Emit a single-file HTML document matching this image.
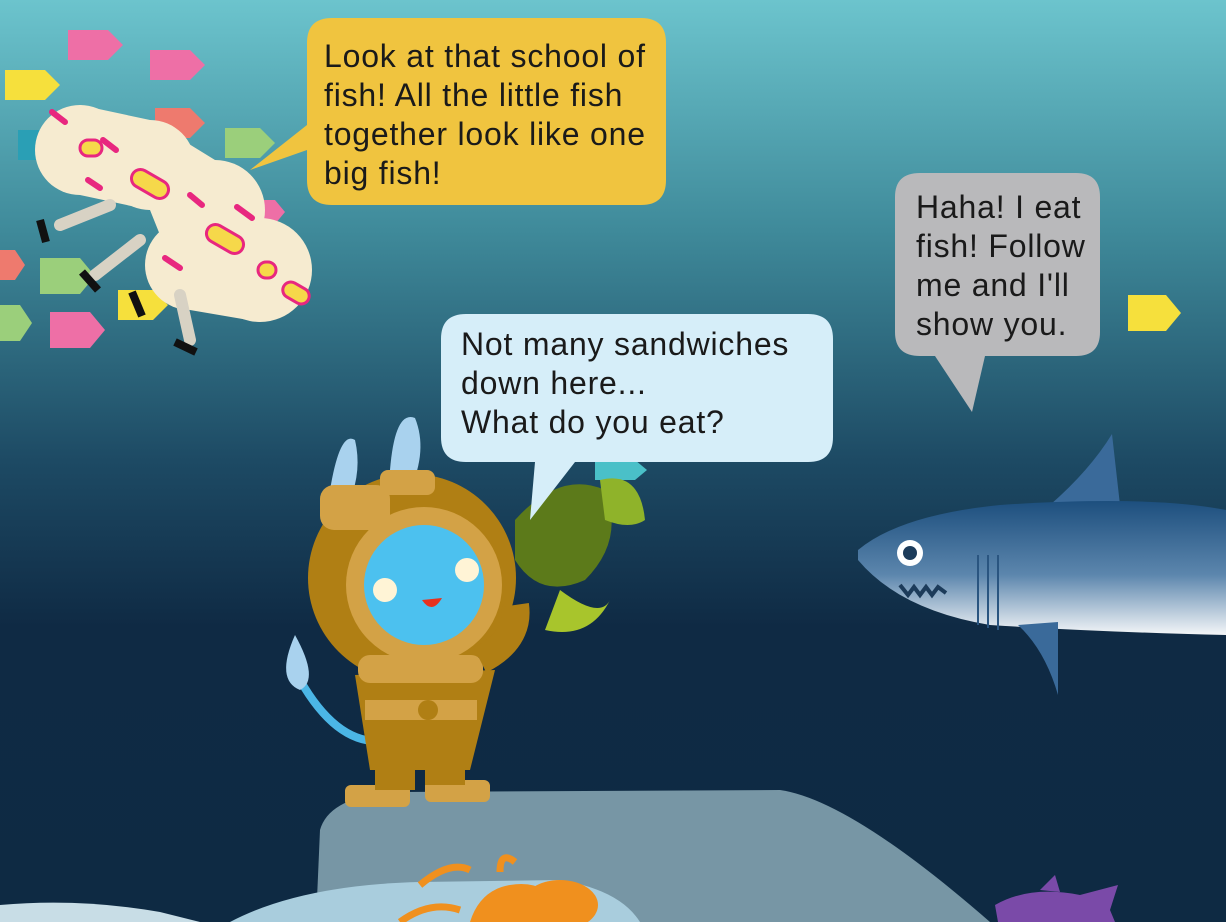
<!DOCTYPE html>
<html><head><meta charset="utf-8"><style>
html,body{margin:0;padding:0}
body{width:1226px;height:922px;overflow:hidden;position:relative;font-family:"Liberation Sans",sans-serif}
svg{position:absolute;left:0;top:0}
.b{position:absolute;font-size:32px;line-height:39px;color:#1a1a1a;letter-spacing:0.8px;white-space:nowrap}
</style></head><body>
<svg width="1226" height="922" viewBox="0 0 1226 922">
<defs>
<linearGradient id="bg" x1="0" y1="0" x2="0" y2="1">
<stop offset="0" stop-color="#6cc4cd"/><stop offset="0.25" stop-color="#3f8a9a"/>
<stop offset="0.5" stop-color="#1d4a64"/><stop offset="0.68" stop-color="#0f2a44"/><stop offset="1" stop-color="#0e2a43"/>
</linearGradient>
<linearGradient id="sh" x1="0" y1="0" x2="0" y2="1">
<stop offset="0" stop-color="#1d4f7e"/><stop offset="0.55" stop-color="#5c86ad"/><stop offset="1" stop-color="#f4f6f8"/>
</linearGradient>
</defs>
<rect width="1226" height="922" fill="url(#bg)"/>
<path d="M316 922 L320 830 Q330 795 400 792 L780 790 Q850 800 990 922 Z" fill="#7796a5"/>
<path d="M230 922 Q300 885 420 882 L560 880 Q620 890 640 922 Z" fill="#a9cddd"/>
<path d="M0 922 L0 905 Q80 898 160 912 L200 922Z" fill="#c8dde6"/>
<g>
<path d="M68 30 l40 0 l15 15 l-15 15 l-40 0z" fill="#ee6fa6"/>
<path d="M150 50 l40 0 l15 15 l-15 15 l-40 0z" fill="#ee6fa6"/>
<path d="M5 70 l40 0 l15 15 l-15 15 l-40 0z" fill="#f6e03c"/>
<path d="M225 128 l35 0 l15 15 l-15 15 l-35 0z" fill="#9bcf7b"/>
<path d="M155 108 l35 0 l15 15 l-15 15 l-35 0z" fill="#ee7a6e"/>
<path d="M18 130 l30 0 l12 15 l-12 15 l-30 0z" fill="#2a9fb5"/>
<path d="M40 258 l40 0 l15 18 l-15 18 l-40 0z" fill="#9bcf7b"/>
<path d="M0 250 l15 0 l10 15 l-10 15 l-15 0z" fill="#ee7a6e"/>
<path d="M50 312 l40 0 l15 18 l-15 18 l-40 0z" fill="#ee6fa6"/>
<path d="M0 305 l20 0 l12 18 l-12 18 l-20 0z" fill="#9bcf7b"/>
<path d="M118 290 l35 0 l15 15 l-15 15 l-35 0z" fill="#f6e03c"/>
<path d="M255 200 l20 0 l10 12 l-10 12 l-20 0z" fill="#ee6fa6"/>
<path d="M1128 295 l38 0 l15 18 l-15 18 l-38 0z" fill="#f6e03c"/>
<path d="M595 460 l40 0 l12 10 l-12 10 l-40 0z" fill="#4ac0c8"/>
</g>
<g fill="#f6ebd0">
<circle cx="80" cy="150" r="45"/><circle cx="150" cy="165" r="45"/><circle cx="215" cy="210" r="50"/><circle cx="260" cy="270" r="52"/><circle cx="190" cy="265" r="45"/>
<path d="M80 105 L150 120 L215 160 L260 218 L260 322 L190 310 L150 210 L80 195Z"/>
</g>
<g stroke="#e8277f" stroke-width="6" stroke-linecap="round">
<line x1="52" y1="112" x2="65" y2="122"/><line x1="103" y1="140" x2="116" y2="150"/><line x1="88" y1="180" x2="100" y2="188"/><line x1="237" y1="207" x2="252" y2="218"/><line x1="165" y1="258" x2="180" y2="268"/><line x1="190" y1="195" x2="202" y2="205"/>
</g>
<g fill="#f6d84a" stroke="#e8277f" stroke-width="3">
<rect x="130" y="175" width="40" height="18" rx="9" transform="rotate(30 150 184)"/>
<rect x="205" y="230" width="40" height="18" rx="9" transform="rotate(30 225 239)"/>
<rect x="80" y="140" width="22" height="16" rx="8"/><rect x="258" y="262" width="18" height="16" rx="8"/>
<rect x="282" y="285" width="28" height="16" rx="8" transform="rotate(30 296 293)"/>
</g>
<g stroke="#d8d2c4" stroke-width="12" stroke-linecap="round" fill="none">
<path d="M110 205 L60 225"/><path d="M140 240 L95 275"/><path d="M180 295 L190 340"/>
</g>
<g stroke="#111" stroke-width="8"><line x1="40" y1="220" x2="46" y2="242"/><line x1="82" y1="272" x2="98" y2="290"/><line x1="132" y1="292" x2="142" y2="316"/><line x1="175" y1="342" x2="196" y2="352"/></g>
<path d="M1050 505 Q1090 470 1112 434 L1120 505Z" fill="#3a6a9a"/>
<path d="M858 550 Q900 515 1000 505 Q1150 495 1226 510 L1226 635 Q1100 632 990 625 Q900 610 858 560Z" fill="url(#sh)"/>
<path d="M1018 625 L1058 622 L1058 695 Q1045 650 1018 625Z" fill="#3a6a9a"/>
<circle cx="910" cy="553" r="13" fill="#fff"/><circle cx="910" cy="553" r="7" fill="#1c3b5a"/>
<path d="M900 585 l8 10 l6 -8 l6 8 l6 -8 l6 8 l6 -8 l8 6" stroke="#1c3b5a" stroke-width="4" fill="none"/>
<g stroke="#2a5580" stroke-width="2"><line x1="978" y1="555" x2="978" y2="625"/><line x1="988" y1="555" x2="988" y2="628"/><line x1="998" y1="555" x2="998" y2="630"/></g>
<path d="M515 520 Q560 470 605 490 Q625 540 585 580 Q540 600 515 560Z" fill="#5c7a1a"/>
<path d="M600 480 Q640 470 645 520 Q630 530 605 520Z" fill="#8fb32a"/>
<path d="M560 590 Q600 620 610 600 Q590 640 545 630Z" fill="#a8c52c"/>
<path d="M330 490 Q340 430 355 440 Q362 470 350 500Z" fill="#a9d2ee"/>
<path d="M390 470 Q395 410 415 418 Q428 450 410 490Z" fill="#a9d2ee"/>
<path d="M300 680 Q340 750 390 740" stroke="#4bb6e6" stroke-width="8" fill="none"/>
<path d="M295 635 Q275 680 300 690 Q320 680 295 635Z" fill="#a9d2ee"/>
<circle cx="412" cy="578" r="104" fill="#b07f14"/>
<circle cx="424" cy="585" r="78" fill="#d3a246"/>
<circle cx="424" cy="585" r="60" fill="#4cc1ef"/>
<circle cx="385" cy="590" r="12" fill="#fff4d6"/><circle cx="467" cy="570" r="12" fill="#fff4d6"/>
<path d="M422 600 Q432 615 442 598Z" fill="#e8321e"/>
<rect x="320" y="485" width="70" height="45" rx="14" fill="#d3a246"/><rect x="380" y="470" width="55" height="25" rx="8" fill="#d3a246"/>
<path d="M355 675 L495 670 L470 770 L370 770Z" fill="#b07f14"/>
<rect x="358" y="655" width="125" height="28" rx="12" fill="#d3a246"/>
<rect x="365" y="700" width="112" height="20" fill="#d3a246"/><circle cx="428" cy="710" r="10" fill="#b07f14"/>
<rect x="345" y="785" width="65" height="22" rx="6" fill="#d3a246"/><rect x="425" y="780" width="65" height="22" rx="6" fill="#d3a246"/>
<rect x="375" y="760" width="40" height="30" fill="#b07f14"/><rect x="425" y="760" width="40" height="25" fill="#b07f14"/>
<path d="M480 660 Q520 640 515 605" stroke="#b07f14" stroke-width="28" fill="none"/>
<path d="M470 922 Q480 890 510 885 Q540 880 555 900 L565 922Z" fill="#f0901e"/>
<ellipse cx="560" cy="905" rx="38" ry="25" fill="#f0901e"/>
<path d="M420 885 Q450 860 470 870 M500 872 Q500 850 515 862 M400 922 Q430 900 460 910" stroke="#f0901e" stroke-width="7" fill="none"/>
<path d="M995 905 Q1030 885 1080 895 L1118 885 L1110 910 L1115 922 L998 922Z" fill="#7a4aa8"/>
<path d="M1040 890 L1055 875 L1060 892Z" fill="#7a4aa8"/>
<path d="M332 18 H641 Q666 18 666 43 V180 Q666 205 641 205 H332 Q307 205 307 180 V150 L250 170 L307 125 V43 Q307 18 332 18Z" fill="#f0c43f"/>
<path d="M920 173 H1076 Q1100 173 1100 197 V332 Q1100 356 1076 356 H985 L972 412 L935 356 H920 Q895 356 895 332 V197 Q895 173 920 173Z" fill="#b9b9bb"/>
<path d="M466 314 H808 Q833 314 833 339 V437 Q833 462 808 462 H575 L530 520 L535 462 H466 Q441 462 441 437 V339 Q441 314 466 314Z" fill="#d6eef9"/>
</svg>
<div class="b" style="left:324px;top:37px">Look at that school of<br>fish! All the little fish<br>together look like one<br>big fish!</div>
<div class="b" style="left:916px;top:188px">Haha! I eat<br>fish! Follow<br>me and I'll<br>show you.</div>
<div class="b" style="left:461px;top:325px">Not many sandwiches<br>down here...<br>What do you eat?</div>
</body></html>
